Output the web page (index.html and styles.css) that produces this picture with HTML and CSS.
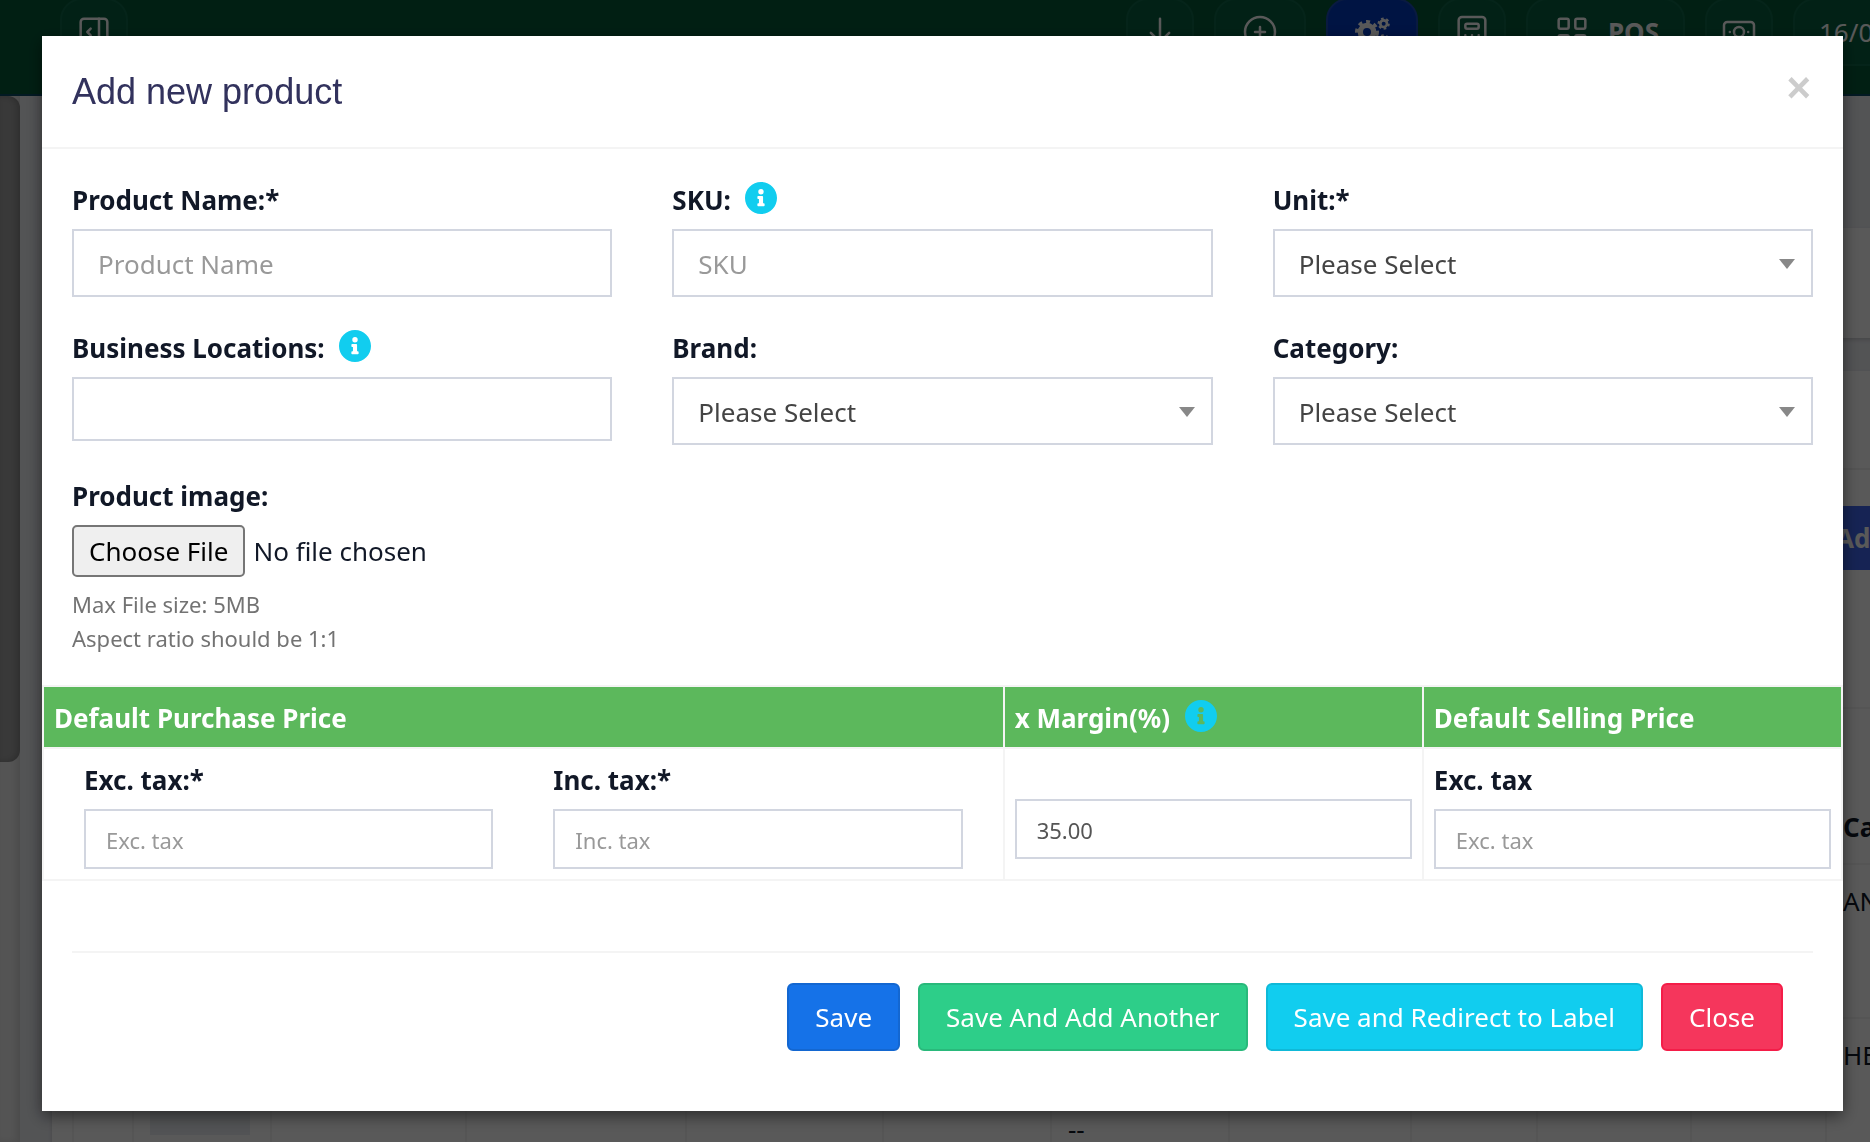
FILE: index.html
```html
<!DOCTYPE html>
<html lang="en">
<head>
    <meta charset="UTF-8">
    <meta name="viewport" content="width=device-width, initial-scale=1.0">
    <title>Add new product</title>
    <link rel="stylesheet" href="styles.css">
</head>
<body>
    <div class="page">
        <header class="navbar">
            <button class="nav-btn" type="button" aria-label="Toggle sidebar">
                <svg class="icon" viewBox="0 0 24 24"><rect x="4" y="4" width="16" height="16" rx="2"/><path d="M15 4v16M10 10l-2 2 2 2"/></svg>
            </button>
            <div class="nav-right">
                <button class="nav-btn" type="button" aria-label="Download">
                    <svg class="icon" viewBox="0 0 24 24"><path d="M12 4v14M6.500 12.500L12 18l5.500-5.500"/></svg>
                </button>
                <button class="nav-btn wide" type="button" aria-label="Add">
                    <svg class="icon" viewBox="0 0 24 24"><circle cx="12" cy="12" r="9"/><path d="M9 12h6M12 9v6"/></svg>
                </button>
                <button class="nav-btn wide active" type="button" aria-label="Settings">
                    <svg class="icon" viewBox="0 0 24 24">
                        <circle class="gear-teeth" cx="9" cy="12" r="6" pathLength="16"/>
                        <circle class="gear" cx="9" cy="12" r="4"/>
                        <circle class="gear-teeth small" cx="19" cy="7" r="3" pathLength="12"/>
                        <circle class="gear small" cx="19" cy="7" r="2"/>
                        <circle class="gear-teeth small" cx="19" cy="17" r="3" pathLength="12"/>
                        <circle class="gear small" cx="19" cy="17" r="2"/>
                    </svg>
                </button>
                <button class="nav-btn" type="button" aria-label="Calculator">
                    <svg class="icon" viewBox="0 0 24 24"><rect x="4" y="3" width="16" height="18" rx="2"/><rect x="8" y="7" width="8" height="3" rx="1"/><path d="M8 14v.01M12 14v.01M16 14v.01M8 17v.01M12 17v.01M16 17v.01"/></svg>
                </button>
                <button class="nav-btn wide" type="button">
                    <svg class="icon" viewBox="0 0 24 24"><rect x="4" y="4" width="6" height="6" rx="1"/><rect x="14" y="4" width="6" height="6" rx="1"/><rect x="4" y="14" width="6" height="6" rx="1"/><rect x="14" y="14" width="6" height="6" rx="1"/></svg>
                    <span>POS</span>
                </button>
                <button class="nav-btn" type="button" aria-label="Today's profit">
                    <svg class="icon" viewBox="0 0 24 24"><rect x="3" y="6" width="18" height="12" rx="2"/><circle cx="12" cy="12" r="3"/><path d="M6.500 12v.01M17.500 12v.01"/></svg>
                </button>
                <div class="nav-btn wide date">16/04/2024</div>
            </div>
        </header>
        <div class="main">
            <aside class="sidebar"><div class="thumb"></div></aside>
            <main class="content">
                <section class="card filters"></section>
                <section class="card products">
                    <div class="tabs"></div>
                    <div class="toolbar"><button class="add-btn" type="button">Add</button></div>
                    <table class="products-table">
                        <colgroup>
                            <col class="c-check"><col class="c-image"><col class="c-action"><col class="c-name"><col class="c-loc"><col class="c-buy"><col class="c-sell"><col class="c-stock"><col class="c-type"><col class="c-tax"><col class="c-brand"><col>
                        </colgroup>
                        <tr><th></th><th></th><th></th><th></th><th></th><th></th><th></th><th></th><th></th><th></th><th></th><th>Category</th></tr>
                        <tr><td></td><td></td><td></td><td></td><td></td><td></td><td></td><td></td><td></td><td></td><td></td><td>ANALGESIC</td></tr>
                        <tr><td></td><td><div class="photo"></div></td><td></td><td></td><td></td><td></td><td class="low">--</td><td></td><td></td><td></td><td></td><td>HERBAL</td></tr>
                    </table>
                </section>
            </main>
        </div>
    </div>

    <div class="backdrop">
        <form class="modal" role="dialog" aria-labelledby="modalTitle">
            <div class="modal-header">
                <h4 id="modalTitle">Add new product</h4>
                <button class="close" type="button" aria-label="Close">&times;</button>
            </div>

            <div class="fields">
                <div class="form-group">
                    <label for="name">Product Name:*</label>
                    <input class="form-control" id="name" type="text" placeholder="Product Name">
                </div>
                <div class="form-group">
                    <label for="sku">SKU:
                        <svg class="info" viewBox="8 8 496 496"><path d="M256 8C119 8 8 119 8 256s111 248 248 248 248-111 248-248S393 8 256 8zm0 110a42 42 0 1 1 0 84 42 42 0 0 1 0-84zm56 254c0 7-5 12-12 12h-88c-7 0-12-5-12-12v-24c0-7 5-12 12-12h12v-64h-12c-7 0-12-5-12-12v-24c0-7 5-12 12-12h64c7 0 12 5 12 12v100h12c7 0 12 5 12 12v24z"/></svg>
                    </label>
                    <input class="form-control" id="sku" type="text" placeholder="SKU">
                </div>
                <div class="form-group">
                    <label for="unit">Unit:*</label>
                    <div class="select-wrap">
                        <select class="form-control" id="unit"><option>Please Select</option></select>
                    </div>
                </div>
                <div class="form-group">
                    <label for="locations">Business Locations:
                        <svg class="info" viewBox="8 8 496 496"><path d="M256 8C119 8 8 119 8 256s111 248 248 248 248-111 248-248S393 8 256 8zm0 110a42 42 0 1 1 0 84 42 42 0 0 1 0-84zm56 254c0 7-5 12-12 12h-88c-7 0-12-5-12-12v-24c0-7 5-12 12-12h12v-64h-12c-7 0-12-5-12-12v-24c0-7 5-12 12-12h64c7 0 12 5 12 12v100h12c7 0 12 5 12 12v24z"/></svg>
                    </label>
                    <input class="form-control multi" id="locations" type="text">
                </div>
                <div class="form-group">
                    <label for="brand">Brand:</label>
                    <div class="select-wrap">
                        <select class="form-control" id="brand"><option>Please Select</option></select>
                    </div>
                </div>
                <div class="form-group">
                    <label for="category">Category:</label>
                    <div class="select-wrap">
                        <select class="form-control" id="category"><option>Please Select</option></select>
                    </div>
                </div>
                <div class="form-group">
                    <label for="image">Product image:</label>
                    <input class="file" id="image" type="file">
                    <p class="help">Max File size: 5MB<br>Aspect ratio should be 1:1</p>
                </div>
            </div>

            <table class="price-table">
                <thead>
                    <tr>
                        <th class="purchase">Default Purchase Price</th>
                        <th>x Margin(%)
                            <svg class="info" viewBox="8 8 496 496"><path d="M256 8C119 8 8 119 8 256s111 248 248 248 248-111 248-248S393 8 256 8zm0 110a42 42 0 1 1 0 84 42 42 0 0 1 0-84zm56 254c0 7-5 12-12 12h-88c-7 0-12-5-12-12v-24c0-7 5-12 12-12h12v-64h-12c-7 0-12-5-12-12v-24c0-7 5-12 12-12h64c7 0 12 5 12 12v100h12c7 0 12 5 12 12v24z"/></svg>
                        </th>
                        <th>Default Selling Price</th>
                    </tr>
                </thead>
                <tbody>
                    <tr>
                        <td>
                            <div class="purchase-fields">
                                <div>
                                    <label for="excTax">Exc. tax:*</label>
                                    <input class="form-control input-sm" id="excTax" type="text" placeholder="Exc. tax">
                                </div>
                                <div>
                                    <label for="incTax">Inc. tax:*</label>
                                    <input class="form-control input-sm" id="incTax" type="text" placeholder="Inc. tax">
                                </div>
                            </div>
                        </td>
                        <td class="margin-cell">
                            <input class="form-control input-sm" type="text" value="35.00" aria-label="Margin">
                        </td>
                        <td>
                            <label for="sellTax">Exc. tax</label>
                            <input class="form-control input-sm" id="sellTax" type="text" placeholder="Exc. tax">
                        </td>
                    </tr>
                </tbody>
            </table>

            <div class="modal-footer">
                <button class="btn btn-primary" type="submit">Save</button>
                <button class="btn btn-success" type="button">Save And Add Another</button>
                <button class="btn btn-info" type="button">Save and Redirect to Label</button>
                <button class="btn btn-danger" type="button">Close</button>
            </div>
        </form>
    </div>
</body>
</html>
```
FILE: styles.css
```css
* {
    box-sizing: border-box;
}
body {
    margin: 0;
    height: 100vh;
    overflow: hidden;
    background-color: #edeff4;
    color: #111827;
    font-family: "Noto Sans", sans-serif;
    font-size: 26px;
    line-height: 40px;
}
button, input, select {
    font-family: inherit;
    font-size: inherit;
    line-height: inherit;
}

/* page behind the modal, wider than the window */
.page {
    width: calc(100% + 130px);
    height: 100%;
    display: flex;
    flex-direction: column;
}
.navbar {
    flex: none;
    display: flex;
    justify-content: space-between;
    align-items: flex-start;
    height: 96px;
    padding: 0 0 0 60px;
    background-color: #055a38;
    border-bottom: 2px solid #0a4a66;
}
.nav-right {
    display: flex;
    gap: 20px;
}
.nav-btn {
    display: flex;
    align-items: center;
    gap: 16px;
    height: 68px;
    margin-top: -2px;
    padding: 0 12px;
    background-color: #066040;
    border: 2px solid #11694a;
    border-radius: 22px;
    color: #fff;
    font-weight: bold;
}
.nav-btn.wide {
    padding: 0 24px;
}
.nav-btn.active {
    background-color: #0039c0;
    border-color: #1a4cb8;
}
.nav-btn.date {
    width: 207px;
    font-weight: normal;
}
.icon {
    width: 40px;
    height: 40px;
    fill: none;
    stroke: #fff;
    stroke-width: 1.5;
    stroke-linecap: round;
    stroke-linejoin: round;
}
.gear {
    stroke-width: 3.2;
}
.gear-teeth {
    stroke-width: 2.4;
    stroke-linecap: butt;
    stroke-dasharray: 1;
}
.gear.small {
    stroke-width: 1.6;
}
.gear-teeth.small {
    stroke-width: 1.4;
}
.main {
    flex: 1;
    display: flex;
    min-height: 0;
}
.sidebar {
    flex: none;
    width: 20px;
    background-color: #f0f0f0;
    box-shadow: inset -4px 0 6px rgba(0, 0, 0, 0.1);
}
.thumb {
    height: 666px;
    background-color: #a4a4a4;
    border-radius: 0 12px 12px 0;
    box-shadow: inset -3px 0 6px rgba(0, 0, 0, 0.2);
}
.content {
    flex: 1;
    padding: 132px 0 0 32px;
    overflow: hidden;
}
.card {
    background-color: #fff;
    box-shadow: 0 2px 4px rgba(0, 0, 0, 0.15);
}
.filters {
    height: 110px;
    margin-bottom: 33px;
}
.products {
    height: 900px;
    padding-left: 20px;
}
.tabs {
    height: 99px;
    border-bottom: 2px solid #f0f0f0;
}
.toolbar {
    display: flex;
    justify-content: flex-end;
    height: 237px;
    padding-top: 36px;
}
.add-btn {
    width: 182px;
    height: 64px;
    padding: 0 18px;
    border: none;
    background-color: #3f66f0;
    color: #fff;
    font-weight: bold;
    text-align: left;
}
.products-table {
    width: 100%;
    table-layout: fixed;
    border-collapse: collapse;
}
.products-table th,
.products-table td {
    height: 154px;
    padding: 16px;
    border: 2px solid #f4f4f4;
    vertical-align: top;
    text-align: left;
}
.products-table th {
    padding-top: 98px;
}
.products-table .low {
    padding-top: 90px;
    padding-bottom: 0;
}
.c-check { width: 60px; }
.c-image { width: 138px; }
.c-action { width: 195px; }
.c-name { width: 220px; }
.c-loc { width: 197px; }
.c-buy { width: 168px; }
.c-sell { width: 178px; }
.c-stock { width: 182px; }
.c-type { width: 126px; }
.c-tax { width: 154px; }
.c-brand { width: 135px; }
.photo {
    width: 100px;
    height: 100px;
    background-color: #eaeef2;
}

.backdrop {
    position: fixed;
    top: 0;
    right: 0;
    bottom: 0;
    left: 0;
    padding: 36px 27px 0 42px;
    background-color: rgba(0, 0, 0, 0.65);
    overflow: hidden;
}
.modal {
    background-color: #fff;
    box-shadow: 0 5px 15px rgba(0, 0, 0, 0.5);
}
.modal-header {
    display: flex;
    justify-content: space-between;
    align-items: flex-start;
    padding: 30px 32px 30px 30px;
    border-bottom: 2px solid #f4f4f4;
}
.modal-header h4 {
    margin: 0;
    color: #32325d;
    font-family: "Liberation Sans", Arial, sans-serif;
    font-size: 36px;
    font-weight: normal;
    line-height: 51px;
}
.close {
    padding: 0;
    border: none;
    background: none;
    color: #ccc;
    font-family: "Liberation Sans", Arial, sans-serif;
    font-size: 42px;
    font-weight: bold;
    line-height: 44px;
    cursor: pointer;
}

/* form */
.fields {
    display: grid;
    grid-template-columns: repeat(3, 1fr);
    column-gap: 60px;
    row-gap: 30px;
    padding: 30px 30px 0;
}
label {
    display: flex;
    align-items: center;
    gap: 14px;
    height: 42px;
    margin-bottom: 8px;
    font-weight: bold;
}
.info {
    width: 32px;
    height: 32px;
    fill: #11cdef;
}
label .info {
    margin-bottom: 4px;
}
.form-control {
    display: block;
    width: 100%;
    height: 68px;
    padding: 2px 24px 0;
    border: 2px solid #d2d6e0;
    border-radius: 0;
    background-color: #fff;
    color: #444;
    appearance: none;
}
.form-control::placeholder {
    color: #999;
}
.form-control.multi {
    height: 64px;
}
.form-control.input-sm {
    height: 60px;
    padding: 2px 20px 0;
    color: #555;
    font-size: 22px;
}
.select-wrap {
    position: relative;
}
.select-wrap::after {
    content: "";
    position: absolute;
    top: 30px;
    right: 18px;
    border-top: 10px solid #888;
    border-left: 8px solid transparent;
    border-right: 8px solid transparent;
    pointer-events: none;
}
.file {
    display: block;
    width: 100%;
    height: 52px;
}
.file::file-selector-button {
    height: 52px;
    margin-right: 8px;
    padding: 0 15px;
    border: 2px solid #767676;
    border-radius: 5px;
    background-color: #efefef;
    color: #000;
    font-family: inherit;
    font-size: inherit;
}
.help {
    margin: 10px 0 0;
    color: #737373;
    font-size: 22px;
    line-height: 34px;
}

/* prices */
.price-table {
    width: 100%;
    margin-top: 30px;
    table-layout: fixed;
    border-collapse: collapse;
}
.price-table th,
.price-table td {
    padding: 10px;
    border: 2px solid #f4f4f4;
    text-align: left;
    vertical-align: top;
}
.price-table th {
    height: 62px;
    padding: 11px 10px 9px;
    background-color: #5cb85c;
    color: #fff;
}
.price-table .purchase {
    width: 53.4%;
}
.price-table .info {
    margin-left: 8px;
    vertical-align: -4px;
}
.price-table .margin-cell {
    padding-top: 50px;
}
.purchase-fields {
    display: grid;
    grid-template-columns: 1fr 1fr;
    column-gap: 60px;
    padding: 0 30px;
}

.modal-footer {
    display: flex;
    justify-content: flex-end;
    gap: 18px;
    margin: 70px 30px 0;
    padding: 30px 30px 60px;
    border-top: 2px solid #f4f4f4;
}
.btn {
    height: 68px;
    padding: 0 26px;
    border: 2px solid;
    border-radius: 6px;
    color: #fff;
    cursor: pointer;
}
.btn-primary {
    background-color: #1572e8;
    border-color: #1367d1;
}
.btn-success {
    background-color: #2dce89;
    border-color: #29b97b;
}
.btn-info {
    background-color: #11cdef;
    border-color: #0fb9d8;
}
.btn-danger {
    background-color: #f5365c;
    border-color: #f41d48;
}
```
